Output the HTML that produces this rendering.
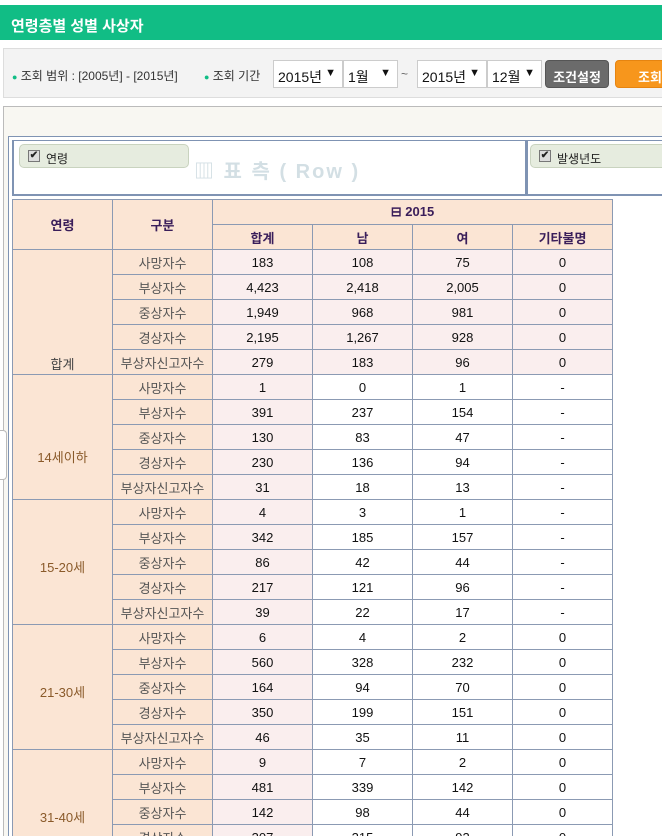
<!DOCTYPE html>
<html><head><meta charset="utf-8"><style>
*{box-sizing:border-box;margin:0;padding:0}
html{width:662px;height:836px;overflow:hidden}
body{width:662px;height:836px;overflow:hidden;background:#fff;font-family:"Liberation Sans","Noto Sans CJK KR","NanumGothic",sans-serif;position:relative}
.hdr{position:absolute;left:0;top:5px;width:662px;height:35px;background:#11bd85;color:#fff;font-size:15px;font-weight:bold;padding:10px 0 0 11px}
.flt{position:absolute;left:3px;top:48px;width:670px;height:50px;background:#f3f3f3;border:1px solid #ddd;font-size:12px;color:#333}
.flt span.l{position:absolute;top:18px}
.dot{color:#11bd85;font-size:9px}
.sel{position:absolute;top:11px;height:28px;background:#fff;border:1px solid #ccc;font-size:14px;padding:6px 0 0 4px;color:#111}
.sel i{position:absolute;right:6px;top:6px;font-style:normal;font-size:11px}
.btn{position:absolute;top:11px;height:28px;border-radius:4px;color:#fff;font-size:13px;font-weight:bold;text-align:center;padding-top:6px}
.cont{position:absolute;left:3px;top:106px;width:670px;height:740px;border:1px solid #bbb;border-right:none;background:#f8f7f2}
.inner{position:absolute;left:8px;top:136px;width:660px;height:700px;background:#fff;border-left:1px solid #7f93b3;border-top:1px solid #7f93b3}
.rowbox{position:absolute;left:12px;top:140px;width:515px;height:56px;border:2px solid #7f93b3;border-top:1px solid #7f93b3;background:#fff}
.colbox{position:absolute;left:526px;top:140px;width:140px;height:56px;border:2px solid #7f93b3;border-top:1px solid #7f93b3;border-right:none;background:#fff}
.chip{position:absolute;top:3px;height:24px;background:#e6ecdf;border:1px solid #c9d3bf;border-radius:5px;font-size:12px;padding:5px 0 0 26px;color:#222}
.chip b{position:absolute;left:8px;top:5px;width:12px;height:12px;border:1px solid #777;background:#ddd;font-size:10px;line-height:10px;text-align:center}
.wm{position:absolute;left:180px;top:14px;color:#d3dfe4;font-size:20px;font-weight:bold;letter-spacing:2px}
table{position:absolute;left:12px;top:199px;border-collapse:collapse;font-size:13px;table-layout:fixed}
td,th{border:1px solid #8b9ab3;height:25px;text-align:center;color:#111;font-weight:normal;padding:0}
th{background:#fbe5d4;color:#3a1e5a;font-weight:bold}
td.g{background:#fbe5d4;color:#555}
td.lab{background:#fbe5d4;vertical-align:top;color:#8a5a2a}
td.p{background:#faeeee}
</style></head><body>
<div class="hdr">연령층별 성별 사상자</div>
<div class="flt">
<span class="l" style="left:8px"><span class="dot">●</span> 조회 범위 : [2005년] - [2015년]</span>
<span class="l" style="left:200px"><span class="dot">●</span> 조회 기간</span>
<div class="sel" style="left:269px;width:70px">2015년<i>▼</i></div>
<div class="sel" style="left:339px;width:55px">1월<i>▼</i></div>
<span class="l" style="left:397px;color:#666">~</span>
<div class="sel" style="left:413px;width:70px">2015년<i>▼</i></div>
<div class="sel" style="left:483px;width:55px">12월<i>▼</i></div>
<div class="btn" style="left:541px;width:64px;background:#6b6b6b;border:1px solid #555">조건설정</div>
<div class="btn" style="left:611px;width:70px;background:#f7961c;border:1px solid #e68410">조회</div>
</div>
<div class="cont"></div>
<div class="inner"></div>
<div class="rowbox"><div class="chip" style="left:5px;width:170px"><b>✔</b>연령</div><div class="wm">▥ 표 측 ( Row )</div></div>
<div class="colbox"><div class="chip" style="left:2px;width:150px"><b>✔</b>발생년도</div></div>
<div style="position:absolute;left:0;top:430px;width:7px;height:50px;border:1px solid #bbb;border-left:none;border-radius:0 4px 4px 0;background:#fff"></div>
<table>
<colgroup><col style="width:100px"><col style="width:100px"><col style="width:100px"><col style="width:100px"><col style="width:100px"><col style="width:100px"></colgroup>
<tr><th rowspan="2">연령</th><th rowspan="2">구분</th><th colspan="4">⊟ 2015</th></tr>
<tr><th>합계</th><th>남</th><th>여</th><th>기타불명</th></tr>
<tr><td class="lab" rowspan="5" style="padding-top:104px;color:#444">합계</td><td class="g">사망자수</td><td class="p">183</td><td class="p">108</td><td class="p">75</td><td class="p">0</td></tr>
<tr><td class="g">부상자수</td><td class="p">4,423</td><td class="p">2,418</td><td class="p">2,005</td><td class="p">0</td></tr>
<tr><td class="g">중상자수</td><td class="p">1,949</td><td class="p">968</td><td class="p">981</td><td class="p">0</td></tr>
<tr><td class="g">경상자수</td><td class="p">2,195</td><td class="p">1,267</td><td class="p">928</td><td class="p">0</td></tr>
<tr><td class="g">부상자신고자수</td><td class="p">279</td><td class="p">183</td><td class="p">96</td><td class="p">0</td></tr>
<tr><td class="lab" rowspan="5" style="padding-top:72px">14세이하</td><td class="g">사망자수</td><td class="p">1</td><td>0</td><td>1</td><td>-</td></tr>
<tr><td class="g">부상자수</td><td class="p">391</td><td>237</td><td>154</td><td>-</td></tr>
<tr><td class="g">중상자수</td><td class="p">130</td><td>83</td><td>47</td><td>-</td></tr>
<tr><td class="g">경상자수</td><td class="p">230</td><td>136</td><td>94</td><td>-</td></tr>
<tr><td class="g">부상자신고자수</td><td class="p">31</td><td>18</td><td>13</td><td>-</td></tr>
<tr><td class="lab" rowspan="5" style="padding-top:57px">15-20세</td><td class="g">사망자수</td><td class="p">4</td><td>3</td><td>1</td><td>-</td></tr>
<tr><td class="g">부상자수</td><td class="p">342</td><td>185</td><td>157</td><td>-</td></tr>
<tr><td class="g">중상자수</td><td class="p">86</td><td>42</td><td>44</td><td>-</td></tr>
<tr><td class="g">경상자수</td><td class="p">217</td><td>121</td><td>96</td><td>-</td></tr>
<tr><td class="g">부상자신고자수</td><td class="p">39</td><td>22</td><td>17</td><td>-</td></tr>
<tr><td class="lab" rowspan="5" style="padding-top:57px">21-30세</td><td class="g">사망자수</td><td class="p">6</td><td>4</td><td>2</td><td>0</td></tr>
<tr><td class="g">부상자수</td><td class="p">560</td><td>328</td><td>232</td><td>0</td></tr>
<tr><td class="g">중상자수</td><td class="p">164</td><td>94</td><td>70</td><td>0</td></tr>
<tr><td class="g">경상자수</td><td class="p">350</td><td>199</td><td>151</td><td>0</td></tr>
<tr><td class="g">부상자신고자수</td><td class="p">46</td><td>35</td><td>11</td><td>0</td></tr>
<tr><td class="lab" rowspan="5" style="padding-top:57px">31-40세</td><td class="g">사망자수</td><td class="p">9</td><td>7</td><td>2</td><td>0</td></tr>
<tr><td class="g">부상자수</td><td class="p">481</td><td>339</td><td>142</td><td>0</td></tr>
<tr><td class="g">중상자수</td><td class="p">142</td><td>98</td><td>44</td><td>0</td></tr>
<tr><td class="g">경상자수</td><td class="p">307</td><td>215</td><td>92</td><td>0</td></tr>
<tr><td class="g">부상자신고자수</td><td class="p">31</td><td>26</td><td>5</td><td>0</td></tr>
</table>
</body></html>
